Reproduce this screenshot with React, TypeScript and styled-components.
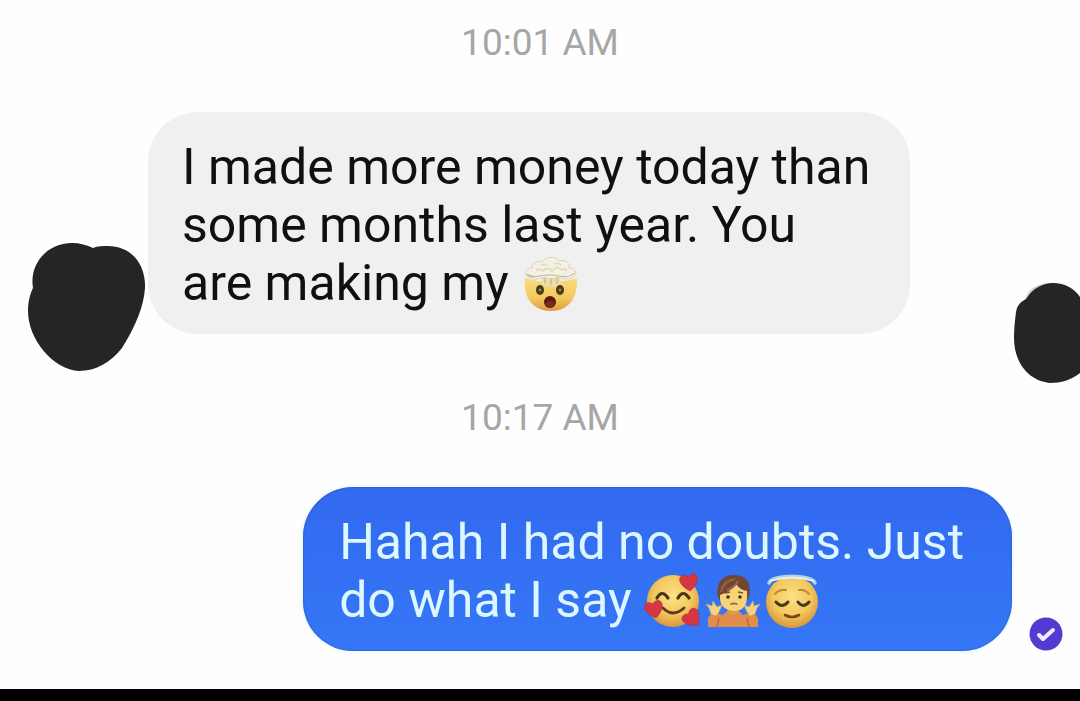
import React from "react";
import styled, { createGlobalStyle } from "styled-components";

const GlobalStyle = createGlobalStyle`
  body {
    margin: 0;
    background: #fefefe;
    font-family: Roboto, "Liberation Sans", sans-serif;
  }
`;

const Screen = styled.main`
  display: flex;
  flex-direction: column;
  min-height: 100vh;
  box-sizing: border-box;
  padding-top: 21px;
  overflow: hidden;
`;

const Timestamp = styled.time`
  display: block;
  margin-bottom: 47px;
  font-size: 37px;
  line-height: 44px;
  text-align: center;
  color: #a6a6a6;
`;

const ReceivedRow = styled.section`
  display: flex;
  align-items: flex-start;
  gap: 2px;
  padding-left: 27px;
  margin-bottom: 12px;
`;

const SentRow = styled.section`
  display: flex;
  align-items: flex-end;
  justify-content: flex-end;
  gap: 17px;
  padding-right: 17px;
  margin-bottom: 38px;
`;

const Bubble = styled.p<{ $sent?: boolean }>`
  margin: 0;
  padding: ${(p) => (p.$sent ? "26px 48px 22px 36px" : "26px 40px 22px 34px")};
  border-radius: 50px;
  font-size: 50px;
  line-height: 58px;
  white-space: nowrap;
  color: ${(p) => (p.$sent ? "#dcf7ff" : "#101010")};
  background: ${(p) => (p.$sent ? "linear-gradient(#3269f0, #3577f6)" : "#f0f0f0")};
  box-shadow: ${(p) => (p.$sent ? "inset 0 0 2px #294f9c, 0 0 4px #d5f3ff" : "none")};
`;

const Avatar = styled.svg<{ $end?: boolean }>`
  flex: none;
  margin-top: ${(p) => (p.$end ? "170px" : "130px")};
  margin-left: ${(p) => (p.$end ? "auto" : "0")};
`;

const EmojiSvg = styled.svg`
  width: 59px;
  height: 56px;
  vertical-align: -12px;
`;

const StatusBadge = styled.svg`
  flex: none;
`;

const BottomBar = styled.footer`
  height: 12px;
  margin-top: auto;
  background: #000;
`;

const FaceGradient = ({ id }: { id: string }) => (
  <radialGradient id={id} cx="50%" cy="40%" r="60%">
    <stop offset="0" stopColor="#fbe187" />
    <stop offset="0.6" stopColor="#f3c95e" />
    <stop offset="1" stopColor="#d9953c" />
  </radialGradient>
);

const Heart = ({ x, y, turn }: { x: number; y: number; turn: number }) => (
  <path
    transform={`translate(${x} ${y}) rotate(${turn})`}
    d="M0 9C-5 6-9 1-9-3C-9-8-3-9 0-5C3-9 9-8 9-3C9 1 5 6 0 9Z"
    fill="#d63542"
    stroke="#b32c3b"
    strokeWidth="0.6"
  />
);

const ExplodingHead = () => (
  <EmojiSvg viewBox="0 0 59 56" role="img" aria-label="Exploding head">
    <defs>
      <linearGradient id="boom" x2="0" y2="1">
        <stop offset="0" stopColor="#f8dc84" />
        <stop offset="0.6" stopColor="#f3c95e" />
        <stop offset="1" stopColor="#dc9a40" />
      </linearGradient>
    </defs>
    <path d="M4 22Q29 30 56 22C57 43 47 55 30 55S2 43 4 22Z" fill="url(#boom)" />
    <path d="M20 29L22 17H38L40 29Q30 32 20 29Z" fill="#ecdcae" />
    <path d="M24 20V28M30 20V29M36 20V28" stroke="#cdbb87" strokeWidth="1.4" />
    <path
      d="M9 22C2 20 4 12 11 12C11 6 17 4 21 6C25 0 35 0 38 5C45 3 50 8 48 12C56 12 57 20 50 22C43 25 39 20 35 22C29 24 24 20 20 22Q14 25 9 22Z"
      fill="#f4f0e2"
      stroke="#d9d2bb"
      strokeWidth="1"
    />
    <path d="M6 18Q10 22 18 20Q30 18 38 20Q49 22 53 17" fill="none" stroke="#bdb69e" strokeWidth="1.2" />
    <path d="M15 15Q18 11 22 15Q27 10 31 15Q36 9 41 14Q44 12 46 15M20 9Q24 7 26 10M33 8Q37 6 40 9" fill="none" stroke="#e0d8bd" strokeWidth="1.4" />
    <ellipse cx="19" cy="34" rx="4" ry="5" fill="#473a16" />
    <ellipse cx="39" cy="34" rx="4" ry="5" fill="#473a16" />
    <circle cx="19" cy="34" r="1.4" fill="#a5894b" />
    <circle cx="39" cy="34" r="1.4" fill="#a5894b" />
    <ellipse cx="29" cy="46" rx="6" ry="6" fill="#5b1712" />
    <ellipse cx="29" cy="48" rx="4" ry="3" fill="#84291f" />
  </EmojiSvg>
);

const SmilingHearts = () => (
  <EmojiSvg viewBox="0 0 59 56" role="img" aria-label="Smiling face with hearts">
    <defs>
      <FaceGradient id="love" />
    </defs>
    <circle cx="29" cy="28" r="26" fill="url(#love)" />
    <path d="M13 25Q18 16 24 25M34 25Q39 16 45 25" fill="none" stroke="#4b3514" strokeWidth="3.2" strokeLinecap="round" />
    <path d="M19 35Q29 45 40 35" fill="none" stroke="#653719" strokeWidth="2.8" strokeLinecap="round" />
    <Heart x={45} y={9} turn={-8} />
    <Heart x={10} y={36} turn={-14} />
    <Heart x={48} y={45} turn={-40} />
  </EmojiSvg>
);

const Shrug = () => (
  <EmojiSvg viewBox="0 0 59 56" role="img" aria-label="Person shrugging">
    <path d="M5 54V46Q7 39 14 40L20 42L26 36H34L40 42L47 40Q53 39 55 46V54Z" fill="#e08c4c" />
    <path d="M14 54L16 45M46 54L44 45" stroke="#bd6c3a" strokeWidth="1.5" />
    <path d="M8 41L6 35L3 31L9 33L10 28L14 34L19 32L16 39L13 43ZM52 41L54 35L57 31L51 33L50 28L46 34L41 32L44 39L47 43Z" fill="#f2d189" stroke="#d9a45c" strokeWidth="0.7" />
    <path d="M25 34H35V40Q30 44 25 40Z" fill="#d99d48" />
    <path d="M15 24C12 10 20 2 31 2C44 2 49 11 46 24L42 30H18Z" fill="#704732" />
    <path d="M17 22Q27 19 33 11Q37 17 44 18V25Q43 38 31 38Q18 37 17 26Z" fill="#f5d47c" />
    <path d="M18 19Q20 8 32 6M24 17Q31 15 35 8" fill="none" stroke="#956449" strokeWidth="2" />
    <path d="M22 20L27 19M35 19L40 20" stroke="#78502b" strokeWidth="1.3" />
    <circle cx="25" cy="24" r="1.8" fill="#43301d" />
    <circle cx="37" cy="24" r="1.8" fill="#43301d" />
    <path d="M28 31Q31 30 34 31" fill="none" stroke="#a8643e" strokeWidth="1.8" strokeLinecap="round" />
  </EmojiSvg>
);

const Halo = () => (
  <EmojiSvg viewBox="0 0 59 56" role="img" aria-label="Smiling face with halo">
    <defs>
      <FaceGradient id="angel" />
    </defs>
    <circle cx="30" cy="29" r="26" fill="url(#angel)" />
    <path d="M7 10C9 1 51 1 53 10" fill="none" stroke="#b4d3dc" strokeWidth="3.6" strokeLinecap="round" />
    <path d="M8 8Q30 1 52 8" fill="none" stroke="#e1f4f5" strokeWidth="1.8" />
    <path d="M13 21Q17 16 24 17M37 17Q43 16 47 21" fill="none" stroke="#c48c31" strokeWidth="2.2" strokeLinecap="round" />
    <path d="M14 29Q20 36 26 29M36 29Q41 36 47 29" fill="none" stroke="#49391c" strokeWidth="3" strokeLinecap="round" />
    <path d="M23 42Q30 46 37 42" fill="none" stroke="#78451e" strokeWidth="2.6" strokeLinecap="round" />
  </EmojiSvg>
);

export default function App() {
  return (
    <>
      <GlobalStyle />
      <Screen>
        <Timestamp>10:01 AM</Timestamp>
        <ReceivedRow>
          <Avatar width="119" height="130" viewBox="0 0 119 130" aria-hidden="true">
            <path
              d="M6 46C2 22 20 1 45 1C53 1 60 3 66 6C71 4 76 4 81 4C104 4 119 22 118 46C117 63 109 84 95 106C84 120 69 129 52 129C27 128 1 98 1 69C1 60 3 52 6 46Z"
              fill="#252525"
            />
          </Avatar>
          <Bubble>
            I made more money today than
            <br />
            some months last year. You
            <br />
            are making my <ExplodingHead />
          </Bubble>
          <Avatar $end width="67" height="102" viewBox="0 0 67 102" aria-hidden="true">
            <path d="M12 19Q15 2 37 1L36 12L20 20Z" fill="#d6d2c0" />
            <path
              d="M3 30C4 24 7 20 13 17C20 6 30 1 40 1C52 1 62 7 67 15V91C58 98 48 101 37 101C15 99 1 80 1 56C1 46 2 38 3 30Z"
              fill="#252525"
            />
          </Avatar>
        </ReceivedRow>
        <Timestamp>10:17 AM</Timestamp>
        <SentRow>
          <Bubble $sent>
            Hahah I had no doubts. Just
            <br />
            do what I say <SmilingHearts />
            <Shrug />
            <Halo />
          </Bubble>
          <StatusBadge width="34" height="34" viewBox="0 0 34 34" role="img" aria-label="Delivered">
            <circle cx="17" cy="17" r="16.5" fill="#513bd0" />
            <path d="M10 18L14 22L24 13" fill="none" stroke="#f0edff" strokeWidth="4" strokeLinecap="round" strokeLinejoin="round" />
          </StatusBadge>
        </SentRow>
        <BottomBar />
      </Screen>
    </>
  );
}
